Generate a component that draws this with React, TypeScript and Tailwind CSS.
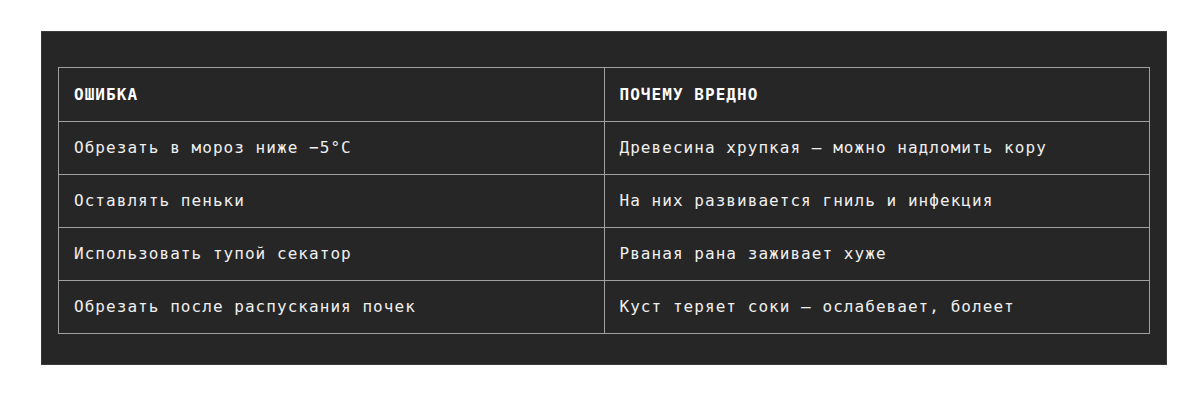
const rows: [string, string][] = [
  ['Обрезать в мороз ниже −5°C', 'Древесина хрупкая — можно надломить кору'],
  ['Оставлять пеньки', 'На них развивается гниль и инфекция'],
  ['Использовать тупой секатор', 'Рваная рана заживает хуже'],
  ['Обрезать после распускания почек', 'Куст теряет соки — ослабевает, болеет'],
]

export default function App() {
  return (
    <div className="min-h-[411px] bg-white pt-[31px] pl-[41px] pr-[33px]">
      <div className="border border-[#3a3a3a] bg-[#262626] px-4 pt-[35px] pb-[30px]">
        <table
          className="w-full table-fixed border-collapse text-[16px] tracking-[1.05px] text-[#efefef]"
          style={{ fontFamily: '"DejaVu Sans Mono", "Liberation Mono", monospace' }}
        >
          <thead>
            <tr className="h-[54px]">
              <th className="border border-[#a0a0a0] pl-[15px] pr-4 text-left font-bold text-white">ОШИБКА</th>
              <th className="border border-[#a0a0a0] pl-[15px] pr-4 text-left font-bold text-white">ПОЧЕМУ ВРЕДНО</th>
            </tr>
          </thead>
          <tbody>
            {rows.map(([mistake, why]) => (
              <tr key={mistake} className="h-[53px]">
                <td className="border border-[#a0a0a0] pl-[15px] pr-4">{mistake}</td>
                <td className="border border-[#a0a0a0] pl-[15px] pr-4">{why}</td>
              </tr>
            ))}
          </tbody>
        </table>
      </div>
    </div>
  )
}
